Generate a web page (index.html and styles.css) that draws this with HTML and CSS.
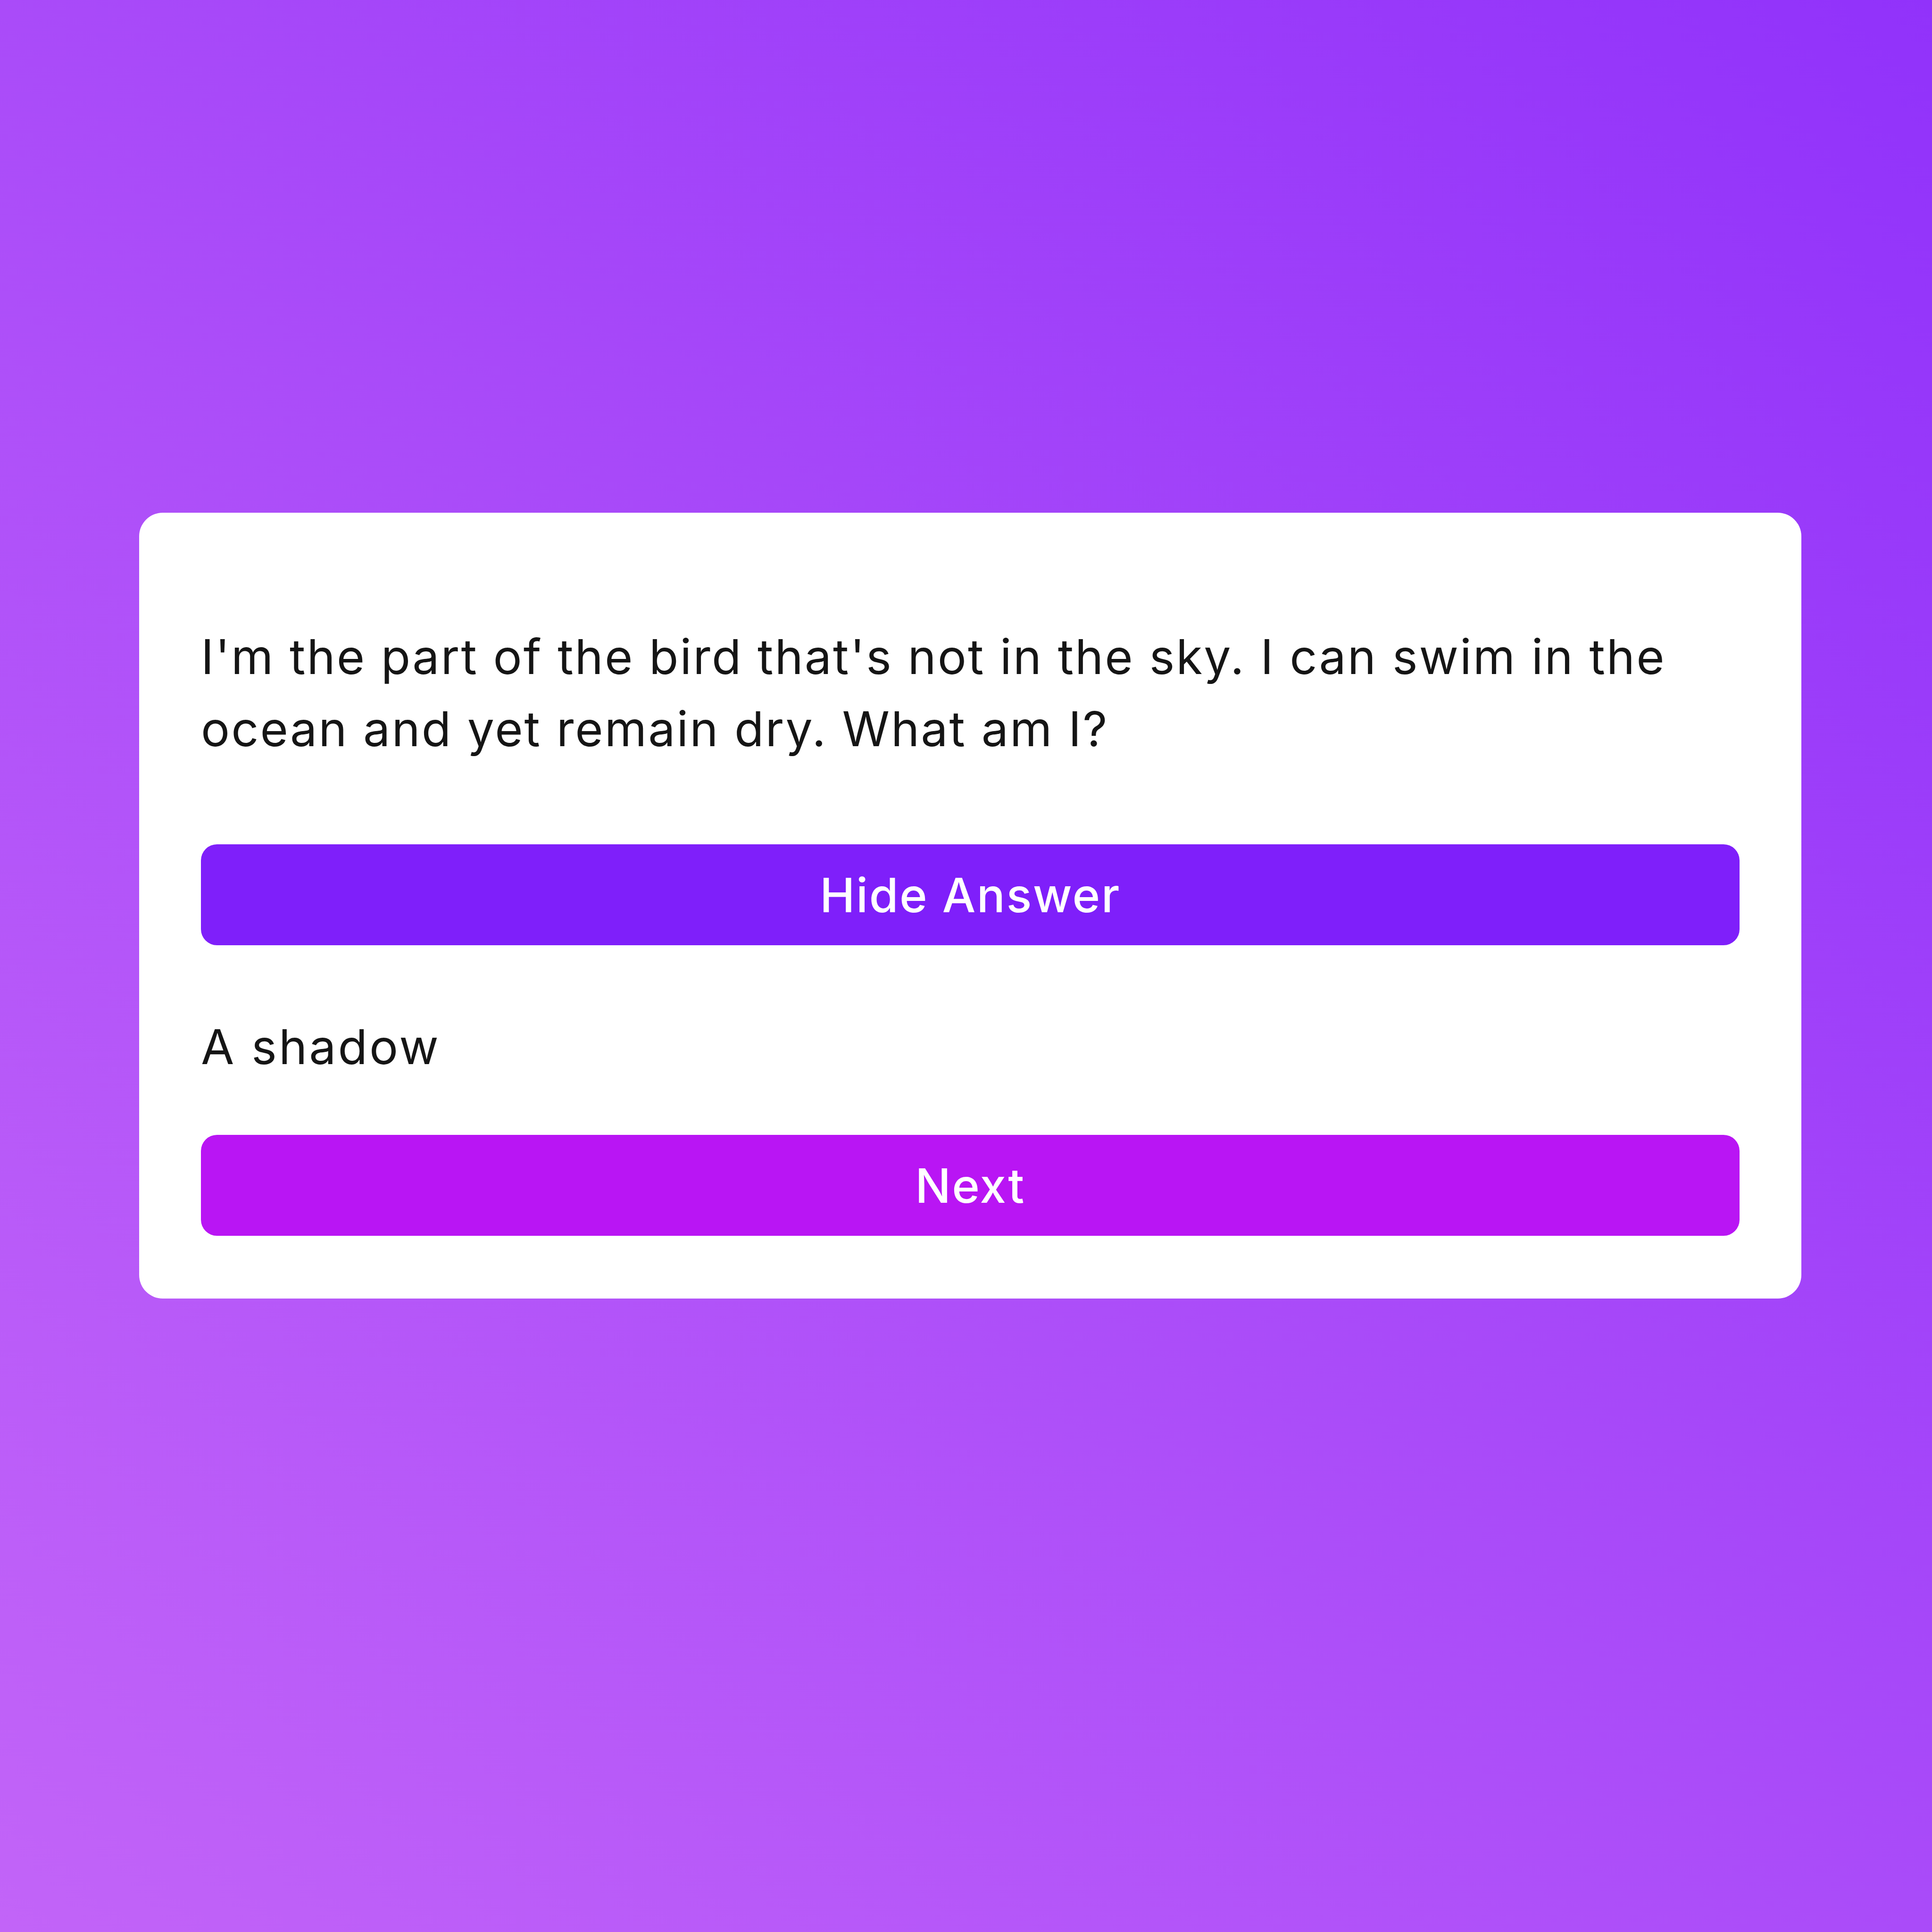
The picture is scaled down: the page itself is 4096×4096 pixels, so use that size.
FILE: index.html
```html
<!DOCTYPE html>
<html lang="en">
<head>
<meta charset="utf-8">
<title>Riddle</title>
<link rel="stylesheet" href="styles.css">
</head>
<body>
<main class="page">
  <section class="card">
    <p class="question">I'm the part of the bird that's not in the sky. I can swim in the ocean and yet remain dry. What am I?</p>
    <button class="btn btn-toggle">Hide Answer</button>
    <p class="answer">A shadow</p>
    <button class="btn btn-next">Next</button>
  </section>
</main>
</body>
</html>
```

FILE: styles.css
```css
html, body {
  margin: 0;
  padding: 0;
}
body {
  width: 4096px;
  min-height: 4096px;
  background: linear-gradient(to top right, #c264f8, #9132fa);
  font-family: Inter, "Open Sans", sans-serif;
  color: #151515;
}
.page {
  padding: 1087px 277px 0 295px;
}
.card {
  background: #ffffff;
  border-radius: 50px;
  padding: 131px 131px 133px;
  display: flex;
  flex-direction: column;
}
.question {
  margin: 98px 0 0;
  font-size: 102px;
  line-height: 153px;
  letter-spacing: 3px;
}
.answer {
  margin: 139px 0 0;
  font-size: 102px;
  line-height: 153px;
  letter-spacing: 4px;
}
.btn {
  display: block;
  width: 100%;
  height: 214px;
  border: 0;
  border-radius: 34px;
  color: #ffffff;
  font-family: inherit;
  font-size: 100px;
  font-weight: 500;
  letter-spacing: 2.5px;
  cursor: pointer;
}
.btn-toggle {
  margin-top: 168px;
  background: #7f1ffa;
}
.btn-next {
  margin-top: 110px;
  background: #b915f4;
}
```
